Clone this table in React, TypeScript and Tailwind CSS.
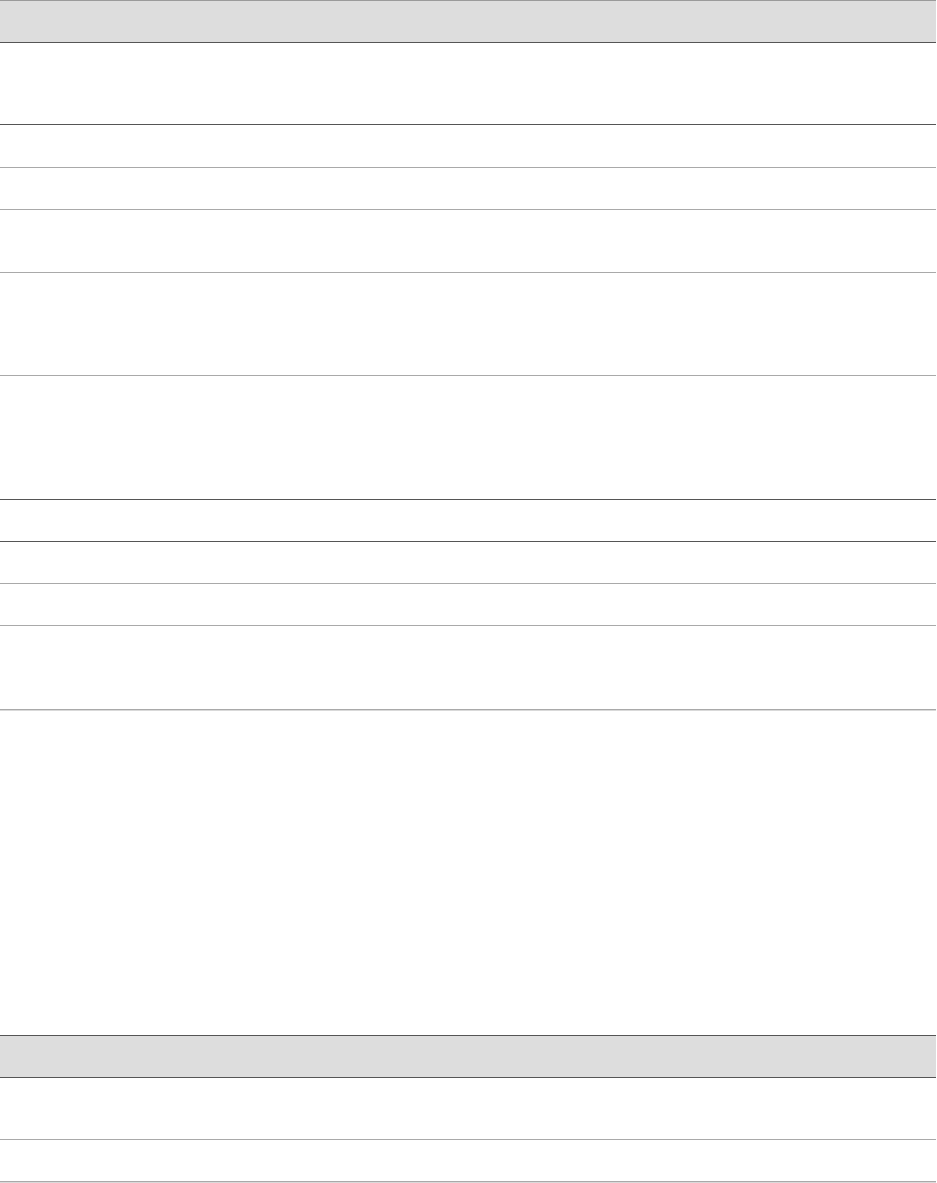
const light = "border-b border-[#a9a9a9] shadow-[0_1px_0_#d9d9d9]"
const dark = "border-b border-[#555555]"

type Row = { h: string; line: "light" | "dark" }

const firstRows: Row[] = [
  { h: "h-[82px]", line: "dark" },
  { h: "h-[43px]", line: "light" },
  { h: "h-[42px]", line: "light" },
  { h: "h-[63px]", line: "light" },
  { h: "h-[103px]", line: "light" },
  { h: "h-[124px]", line: "dark" },
  { h: "h-[42px]", line: "dark" },
  { h: "h-[42px]", line: "light" },
  { h: "h-[42px]", line: "light" },
  { h: "h-[84px]", line: "light" },
]

const secondRows: Row[] = [
  { h: "h-[62px]", line: "light" },
  { h: "h-[42px]", line: "light" },
]

function Table({ rows, topLine, className }: { rows: Row[]; topLine: string; className?: string }) {
  return (
    <div className={`w-[936px] border-t ${topLine} ${className ?? ""}`}>
      <div className="box-border h-[42px] border-b border-[#555555] bg-[#dddddd]" />
      {rows.map((row, i) => (
        <div
          key={i}
          className={`relative box-border bg-white ${row.h} ${row.line === "dark" ? dark : light}`}
        />
      ))}
    </div>
  )
}

export default function App() {
  return (
    <div className="min-h-[1183px] w-[937px] bg-white font-['Liberation_Sans',sans-serif]">
      <Table rows={firstRows} topLine="border-[#9a9a9a]" />
      <Table rows={secondRows} topLine="border-[#555555]" className="mt-[325px]" />
    </div>
  )
}
